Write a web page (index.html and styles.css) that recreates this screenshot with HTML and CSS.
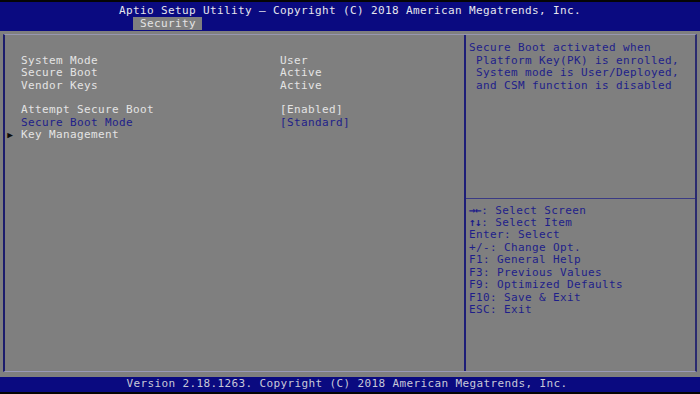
FILE: index.html
```html
<!DOCTYPE html>
<html>
<head>
<meta charset="utf-8">
<link rel="stylesheet" href="styles.css">
</head>
<body>
<div class="screen">
  <div class="blackbar"></div>
  <header class="header">
    <div class="title">Aptio Setup Utility – Copyright (C) 2018 American Megatrends, Inc.</div>
    <div class="tabs"><span class="tab">Security</span></div>
  </header>
  <main class="main">
    <div class="frame">
      <section class="left">
        <div class="row blank"></div>
        <div class="row"><span class="label">System Mode</span><span class="value">User</span></div>
        <div class="row"><span class="label">Secure Boot</span><span class="value">Active</span></div>
        <div class="row"><span class="label">Vendor Keys</span><span class="value">Active</span></div>
        <div class="row blank"></div>
        <div class="row"><span class="label">Attempt Secure Boot</span><span class="value">[Enabled]</span></div>
        <div class="row selected"><span class="label">Secure Boot Mode</span><span class="value">[Standard]</span></div>
        <div class="row submenu"><span class="arrow">▶</span><span class="label">Key Management</span></div>
      </section>
      <aside class="right">
        <div class="desc">
          <div class="line">Secure Boot activated when</div>
          <div class="line"> Platform Key(PK) is enrolled,</div>
          <div class="line"> System mode is User/Deployed,</div>
          <div class="line"> and CSM function is disabled</div>
        </div>
        <div class="help">
          <div class="line"><span class="arr">→←</span>: Select Screen</div>
          <div class="line"><span class="arr">↑↓</span>: Select Item</div>
          <div class="line">Enter: Select</div>
          <div class="line">+/-: Change Opt.</div>
          <div class="line">F1: General Help</div>
          <div class="line">F3: Previous Values</div>
          <div class="line">F9: Optimized Defaults</div>
          <div class="line">F10: Save &amp; Exit</div>
          <div class="line">ESC: Exit</div>
        </div>
      </aside>
    </div>
  </main>
  <footer class="footer">Version 2.18.1263. Copyright (C) 2018 American Megatrends, Inc.</footer>
  <div class="blackbar bottom"></div>
</div>
</body>
</html>
```

FILE: styles.css
```css
* { box-sizing: border-box; }
html, body {
  margin: 0;
  padding: 0;
  background: #000;
}
body {
  width: 700px;
  height: 394px;
  overflow: hidden;
  font-family: "DejaVu Sans Mono", "Liberation Mono", monospace;
  font-size: 11px;
  letter-spacing: 0.38px;
  color: #e4e4e4;
}
.screen {
  width: 700px;
  height: 394px;
  display: flex;
  flex-direction: column;
}
.blackbar { height: 2px; background: #050505; flex: none; }
.header {
  height: 28px;
  background: #0a0a80;
  flex: none;
  padding-top: 2px;
}
.title {
  height: 13px;
  line-height: 13px;
  text-align: center;
  white-space: pre;
  color: #e6e6ee;
}
.tabs {
  padding-left: 133px;
  height: 13px;
}
.tab {
  display: inline-block;
  height: 13px;
  line-height: 14px;
  padding: 0 6px 0 7px;
  background: #7f7f7f;
  color: #e4e4e4;
}
.main {
  flex: 1;
  min-height: 0;
  background: #7f7f7f;
  padding: 3px 3px 5px 3px;
  border-top: 1px solid #0a0a80;
}
.frame {
  height: 100%;
  display: flex;
  border-top: 1px solid #9696b0;
  border-bottom: 1px solid #9a9ab8;
  border-left: 2px solid #1c1c6c;
  border-right: 2px solid #2a2a70;
}
.left {
  width: 461px;
  flex: none;
  padding: 7.5px 0 0 0;
  border-right: 2px solid #1e1e78;
}
.row {
  display: flex;
  height: 12.4px;
  line-height: 12.4px;
  white-space: pre;
}
.row .label { width: 259px; flex: none; margin-left: 16px; }
.row.selected { color: #1e1e8a; }
.row.submenu .label { margin-left: 7px; }
.arrow {
  width: 9px;
  font-size: 9.5px;
  color: #0c0c0c;
  text-align: center;
  padding-left: 1px;
  letter-spacing: 0;
}
.right {
  flex: 1;
  display: flex;
  flex-direction: column;
  color: #1e1e8a;
}
.desc {
  height: 164px;
  padding: 7px 0 0 3px;
  border-bottom: 1px solid #3a3a84;
}
.help {
  padding: 5.5px 0 0 3px;
}
.desc .line { height: 12.5px; line-height: 12.5px; white-space: pre; }
.help .line { height: 12.45px; line-height: 12.45px; white-space: pre; }
.arr { letter-spacing: -0.5px; font-weight: bold; }
.footer {
  height: 15px;
  line-height: 14px;
  background: #0a0a80;
  color: #c8c8d8;
  text-align: center;
  padding-right: 6px;
  white-space: pre;
  flex: none;
}
```
